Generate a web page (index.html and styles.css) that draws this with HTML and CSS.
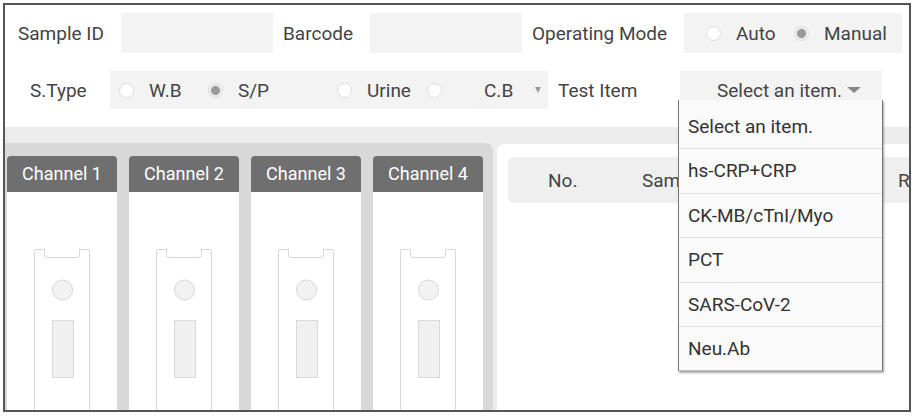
FILE: index.html
```html
<!DOCTYPE html>
<html lang="en">
<head>
    <meta charset="UTF-8">
    <meta name="viewport" content="width=device-width, initial-scale=1.0">
    <title>Test</title>
    <link rel="stylesheet" href="styles.css">
</head>
<body>
    <div class="frame">
        <!-- 上段: サンプル情報 -->
        <div class="row row-top">
            <label class="lbl lbl-sample">Sample ID</label>
            <div class="field"></div>
            <label class="lbl lbl-barcode">Barcode</label>
            <div class="field"></div>
            <label class="lbl lbl-mode">Operating Mode</label>
            <div class="radio-box mode-box">
                <span class="opt opt-auto"><i class="radio"></i>Auto</span>
                <span class="opt"><i class="radio on"></i>Manual</span>
            </div>
        </div>

        <!-- 2段目: サンプル種類 / 検査項目 -->
        <div class="row row-type">
            <label class="lbl lbl-type">S.Type</label>
            <div class="radio-box type-box">
                <span class="opt"><i class="radio"></i>W.B</span>
                <span class="opt"><i class="radio on"></i>S/P</span>
                <span class="opt"><i class="radio"></i>Urine</span>
                <span class="opt opt-cb"><i class="radio"></i>C.B<i class="mini-caret"></i></span>
            </div>
            <label class="lbl lbl-test">Test Item</label>
            <div class="select">Select an item.<i class="caret"></i></div>
        </div>

        <div class="work">
            <div class="channels">
                <div class="channel">
                    <div class="channel-head">Channel 1</div>
                    <div class="channel-body">
                        <svg class="strip" width="56" height="170" viewBox="0 0 56 170">
                            <path d="M0.5 170 V2 Q0.5 0.5 2 0.5 H10.5 V6 Q10.5 8.5 13 8.5 H43 Q45.5 8.5 45.5 6 V0.5 H54 Q55.5 0.5 55.5 2 V170" fill="none" stroke="#d8d8d8"/>
                            <circle cx="28.5" cy="41" r="10" fill="#f2f2f2" stroke="#d8d8d8"/>
                            <rect x="18.5" y="71.5" width="21" height="57" fill="#f0f0f0" stroke="#dadada"/>
                        </svg>
                    </div>
                </div>
                <div class="channel">
                    <div class="channel-head">Channel 2</div>
                    <div class="channel-body">
                        <svg class="strip" width="56" height="170" viewBox="0 0 56 170">
                            <path d="M0.5 170 V2 Q0.5 0.5 2 0.5 H10.5 V6 Q10.5 8.5 13 8.5 H43 Q45.5 8.5 45.5 6 V0.5 H54 Q55.5 0.5 55.5 2 V170" fill="none" stroke="#d8d8d8"/>
                            <circle cx="28.5" cy="41" r="10" fill="#f2f2f2" stroke="#d8d8d8"/>
                            <rect x="18.5" y="71.5" width="21" height="57" fill="#f0f0f0" stroke="#dadada"/>
                        </svg>
                    </div>
                </div>
                <div class="channel">
                    <div class="channel-head">Channel 3</div>
                    <div class="channel-body">
                        <svg class="strip" width="56" height="170" viewBox="0 0 56 170">
                            <path d="M0.5 170 V2 Q0.5 0.5 2 0.5 H10.5 V6 Q10.5 8.5 13 8.5 H43 Q45.5 8.5 45.5 6 V0.5 H54 Q55.5 0.5 55.5 2 V170" fill="none" stroke="#d8d8d8"/>
                            <circle cx="28.5" cy="41" r="10" fill="#f2f2f2" stroke="#d8d8d8"/>
                            <rect x="18.5" y="71.5" width="21" height="57" fill="#f0f0f0" stroke="#dadada"/>
                        </svg>
                    </div>
                </div>
                <div class="channel">
                    <div class="channel-head">Channel 4</div>
                    <div class="channel-body">
                        <svg class="strip" width="56" height="170" viewBox="0 0 56 170">
                            <path d="M0.5 170 V2 Q0.5 0.5 2 0.5 H10.5 V6 Q10.5 8.5 13 8.5 H43 Q45.5 8.5 45.5 6 V0.5 H54 Q55.5 0.5 55.5 2 V170" fill="none" stroke="#d8d8d8"/>
                            <circle cx="28.5" cy="41" r="10" fill="#f2f2f2" stroke="#d8d8d8"/>
                            <rect x="18.5" y="71.5" width="21" height="57" fill="#f0f0f0" stroke="#dadada"/>
                        </svg>
                    </div>
                </div>
            </div>

            <div class="results">
                <div class="thead">
                    <span class="col-no">No.</span>
                    <span class="col-sample">Sample ID</span>
                    <span class="col-result">Result</span>
                </div>
            </div>
        </div>

        <!-- 検査項目ドロップダウン -->
        <ul class="menu">
            <li>Select an item.</li>
            <li>hs-CRP+CRP</li>
            <li>CK-MB/cTnI/Myo</li>
            <li>PCT</li>
            <li>SARS-CoV-2</li>
            <li>Neu.Ab</li>
        </ul>
    </div>
</body>
</html>
```

FILE: styles.css
```css
body {
    margin: 0;
    background: #fff;
    font-family: Roboto, "Noto Sans", sans-serif;
    color: #444;
}
.frame {
    position: relative;
    box-sizing: border-box;
    width: 908px;
    height: 409px;
    margin: 3px 0 0 3px;
    border: 2px solid #555;
    overflow: hidden;
    display: flex;
    flex-direction: column;
    background: #fff;
}
.row {
    display: flex;
    align-items: stretch;
    font-size: 19px;
    flex-shrink: 0;
}
.row-top {
    height: 40px;
    margin-top: 8px;
}
.row-type {
    height: 38px;
    margin-top: 18px;
}
.lbl {
    box-sizing: border-box;
    display: flex;
    align-items: center;
    padding-left: 10px;
}
.lbl-sample { width: 116px; padding-left: 13px; }
.lbl-barcode { width: 97px; }
.lbl-mode { width: 162px; }
.lbl-type { width: 105px; padding-left: 25px; }
.lbl-test { width: 132px; }
.field {
    width: 152px;
    background: #f3f3f3;
}
.radio-box {
    box-sizing: border-box;
    display: flex;
    align-items: center;
    background: #f3f3f3;
}
.mode-box {
    width: 218px;
    padding-left: 22px;
}
.type-box {
    width: 438px;
    padding-left: 9px;
}
.opt {
    display: flex;
    align-items: center;
    gap: 15px;
}
.opt-auto { width: 88px; }
.type-box .opt:nth-child(1) { width: 89px; }
.type-box .opt:nth-child(2) { width: 129px; }
.type-box .opt:nth-child(3) { width: 90px; }
.opt-cb { gap: 0; }
.opt-cb .radio { margin-right: 42px; }
.radio {
    box-sizing: border-box;
    width: 15px;
    height: 15px;
    border-radius: 50%;
    border: 1px solid #dcdcdc;
    background: #fff;
}
.radio.on {
    background: radial-gradient(circle, #999 0 4px, #ececec 5px);
}
.mini-caret {
    width: 0;
    height: 0;
    margin-left: 22px;
    border-left: 3px solid transparent;
    border-right: 3px solid transparent;
    border-top: 6px solid #999;
}
.select {
    box-sizing: border-box;
    width: 202px;
    display: flex;
    align-items: center;
    justify-content: flex-end;
    padding-right: 21px;
    background: #f3f3f3;
}
.caret {
    width: 0;
    height: 0;
    margin-left: 5px;
    border-left: 7px solid transparent;
    border-right: 7px solid transparent;
    border-top: 6px solid #888;
}
.work {
    flex: 1;
    display: flex;
    gap: 4px;
    margin-top: 18px;
    padding-top: 16px;
    background: #ececec;
    min-height: 0;
}
.channels {
    display: flex;
    gap: 12px;
    padding: 13px 10px 0 2px;
    background: #d8d8d8;
    border-top-right-radius: 8px;
}
.channel {
    width: 110px;
    display: flex;
    flex-direction: column;
}
.channel-head {
    height: 36px;
    line-height: 36px;
    text-align: center;
    font-size: 18px;
    color: #fff;
    background: #6f6f6f;
    border-radius: 4px 4px 0 0;
}
.channel-body {
    flex: 1;
    display: flex;
    justify-content: center;
    padding-top: 57px;
    background: #fff;
    overflow: hidden;
}
.results {
    flex: 1;
    margin-top: 1px;
    padding: 13px 0 0 11px;
    background: #fff;
    border-top-left-radius: 8px;
}
.thead {
    height: 46px;
    display: flex;
    align-items: center;
    font-size: 19px;
    color: #444;
    background: #efefef;
    border-radius: 6px 0 0 6px;
    white-space: nowrap;
}
.col-no { margin-left: 40px; width: 94px; }
.col-sample { width: 256px; }
.menu {
    position: absolute;
    left: 673px;
    top: 95px;
    width: 203px;
    margin: 0;
    padding: 5px 0 0;
    list-style: none;
    background: #fafafa;
    border-left: 1px solid #777;
    border-right: 1px solid #777;
    box-shadow: 1px 2px 2px rgba(0, 0, 0, 0.35);
    font-size: 19px;
    color: #333;
}
.menu li {
    height: 44.4px;
    line-height: 44px;
    padding-left: 9px;
    border-bottom: 1px solid #e2e2e2;
    box-sizing: border-box;
}
.menu li:last-child {
    border-bottom: 1px solid #bbb;
}
```
